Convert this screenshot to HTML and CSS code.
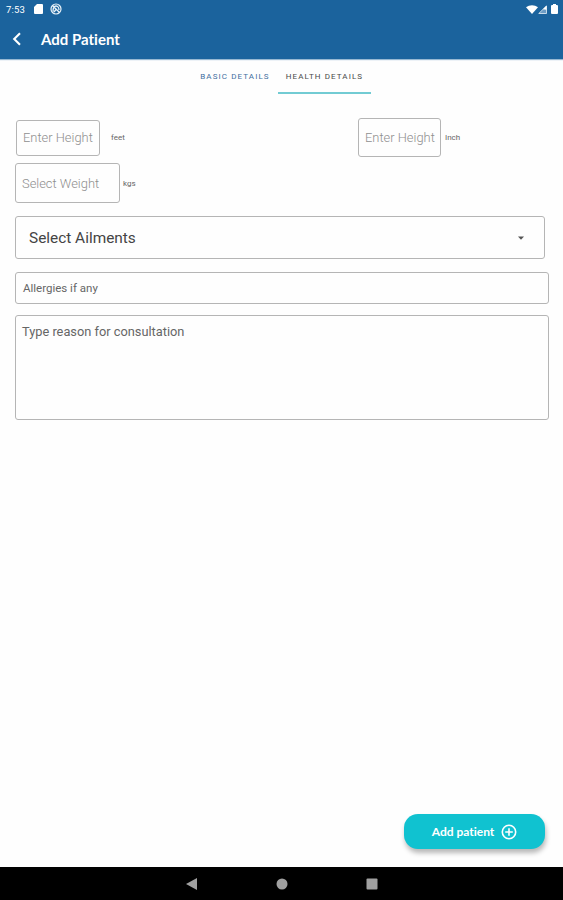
FILE: index.html
```html
<!DOCTYPE html>
<html lang="en">
<head>
    <meta charset="UTF-8">
    <meta name="viewport" content="width=device-width, initial-scale=1.0">
    <title>Add Patient</title>
    <link rel="stylesheet" href="styles.css">
</head>
<body>
    <header class="header">
        <div class="status-bar">
            <span class="clock">7:53</span>
            <svg class="sd-icon" width="9" height="10" viewBox="0 0 9 10"><path d="M3 0h5a1 1 0 0 1 1 1v8a1 1 0 0 1-1 1H1a1 1 0 0 1-1-1V3z" fill="#fff"/></svg>
            <svg class="app-icon" width="12" height="12" viewBox="0 0 12 12" fill="none" stroke="#e8f1f8"><circle cx="6" cy="6" r="5" stroke-width="1.2"/><path d="M2.5 2.5l7 7M3 8.5c0-3 1-5.500 3-5.500s3 2.500 3 4M4 9l2-2.500" stroke-width="1.300"/></svg>
            <span class="status-right">
                <svg width="12" height="9" viewBox="0 0 12 9"><path d="M0 2.200C3.500-.5 8.500-.5 12 2.200L6 9z" fill="#fff"/></svg>
                <svg width="9" height="9" viewBox="0 0 9 9"><path d="M.8 8.500L8.500.8v7.700z" fill="#6c9cc5" stroke="#e8f1f8" stroke-width=".8"/><path d="M5 4.300L8.500.8v4z" fill="#fff"/></svg>
                <svg class="battery" width="7" height="10" viewBox="0 0 7 10"><path d="M2 0h3v1h1.300l.7.700V9.300l-.7.700H.7L0 9.300V1.700L.7 1H2z" fill="#fff"/></svg>
            </span>
        </div>
        <div class="title-bar">
            <svg class="back" width="10" height="14" viewBox="0 0 10 14"><path d="M8 1.200L2.200 7 8 12.800" fill="none" stroke="#fff" stroke-width="2.100"/></svg>
            <h1>Add Patient</h1>
        </div>
    </header>

    <nav class="tabs">
        <div class="tab">BASIC DETAILS</div>
        <div class="tab active">HEALTH DETAILS</div>
    </nav>

    <main class="form">
        <div class="height-row">
            <div class="field feet">Enter Height</div>
            <span class="unit unit-feet">feet</span>
            <div class="field inch">Enter Height</div>
            <span class="unit">Inch</span>
        </div>
        <div class="weight-row">
            <div class="field weight">Select Weight</div>
            <span class="unit unit-kgs">kgs</span>
        </div>
        <div class="field ailments">
            <span>Select Ailments</span>
            <svg width="6" height="4" viewBox="0 0 6 4"><path d="M0 .5h6L3 3.700z" fill="#555"/></svg>
        </div>
        <div class="field allergies">Allergies if any</div>
        <div class="field reason">Type reason for consultation</div>
    </main>

    <footer class="actions">
        <button class="add-button">
            <span>Add patient</span>
            <svg width="16" height="16" viewBox="0 0 16 16" fill="none" stroke="#fff" stroke-width="1.600"><circle cx="8" cy="8" r="6.700"/><path d="M8 4.200v7.600M4.200 8h7.600"/></svg>
        </button>
    </footer>

    <!-- Android navigation -->
    <div class="nav-bar">
        <svg width="12" height="12" viewBox="0 0 12 12"><path d="M11 0v12L0 6z" fill="#a0a0a0"/></svg>
        <svg width="12" height="12" viewBox="0 0 12 12"><circle cx="6" cy="6" r="5.500" fill="#a0a0a0"/></svg>
        <svg width="12" height="12" viewBox="0 0 12 12"><rect x=".5" y=".5" width="11" height="11" rx="1" fill="#a0a0a0"/></svg>
    </div>
</body>
</html>
```
FILE: styles.css
```css
* {
    box-sizing: border-box;
}

body {
    margin: 0;
    height: 900px;
    display: flex;
    flex-direction: column;
    background: #fefefe;
    font-family: Roboto, sans-serif;
    overflow: hidden;
}

svg {
    display: block;
    flex: none;
}

/* Header */
.header {
    height: 59px;
    background: #1b639d;
    color: #fff;
    box-shadow: 0 1px 1px rgba(27, 99, 157, 0.45);
}

.status-bar {
    height: 18px;
    display: flex;
    align-items: center;
    padding: 0 5px 0 6px;
}

.clock {
    width: 28px;
    font-size: 9.5px;
    letter-spacing: 0.2px;
}

.app-icon {
    margin-left: 7px;
}

.status-right {
    display: flex;
    align-items: center;
    margin-left: auto;
}

.battery {
    margin-left: 4px;
}

.title-bar {
    height: 41px;
    display: flex;
    align-items: center;
    padding: 0 0 0 12px;
}

.title-bar h1 {
    margin: 1px 0 0 19px;
    font: 700 15px Lato, sans-serif;
    font-variant-ligatures: none;
}

/* Tabs */
.tabs {
    height: 35px;
    display: flex;
    padding-left: 192px;
}

.tab {
    width: 86px;
    text-align: center;
    white-space: nowrap;
    font-size: 8px;
    line-height: 35px;
    letter-spacing: 1.1px;
    color: #3f6fa0;
}

.tab.active {
    width: 93px;
    color: #4a4a4a;
    border-bottom: 2px solid #72cbd3;
}

/* Form */
.form {
    flex: 1;
    padding: 24px 14px 0 15px;
}

.field {
    display: flex;
    align-items: center;
    border: 1px solid #b5b5b5;
    border-radius: 3px;
    padding-left: 7px;
    color: #8f8f8f;
    font-size: 12.9px;
    font-weight: 300;
    white-space: nowrap;
}

.height-row,
.weight-row {
    display: flex;
    align-items: center;
}

.height-row {
    height: 39px;
}

.feet {
    width: 84px;
    height: 36px;
    margin-left: 1px;
    padding-left: 6px;
}

.unit {
    margin-left: 4px;
    font-size: 8px;
    color: #666;
}

.unit-feet {
    width: 247px;
    margin-left: 11px;
}

.unit-kgs {
    margin-left: 3px;
}

.inch {
    width: 83px;
    height: 39px;
    padding-left: 6px;
}

.weight-row {
    margin-top: 6px;
}

.weight {
    width: 105px;
    height: 40px;
    padding-left: 6px;
}

.ailments {
    width: 530px;
    height: 43px;
    margin-top: 13px;
    padding: 0 20px 0 13px;
    justify-content: space-between;
    color: #444;
    font-size: 15.4px;
    font-weight: 400;
}

.allergies {
    height: 32px;
    margin-top: 13px;
    color: #666;
    font-size: 11.5px;
    font-weight: 400;
}

.reason {
    height: 105px;
    margin-top: 11px;
    padding-top: 8px;
    padding-left: 6px;
    align-items: flex-start;
    color: #666;
    font-size: 12.8px;
    font-weight: 400;
}

/* Bottom action */
.actions {
    display: flex;
    justify-content: flex-end;
    padding: 0 18px 18px 0;
}

.add-button {
    width: 141px;
    height: 35px;
    display: flex;
    align-items: center;
    justify-content: center;
    gap: 7px;
    padding: 0;
    border: none;
    border-radius: 14px;
    background: #10c2d0;
    box-shadow: 1px 4px 5px rgba(0, 0, 0, 0.28);
    color: #fff;
    font: 700 12px Lato, sans-serif;
    font-variant-ligatures: none;
}

.nav-bar {
    height: 33px;
    display: flex;
    align-items: center;
    justify-content: center;
    gap: 78px;
    background: #000;
}
```
